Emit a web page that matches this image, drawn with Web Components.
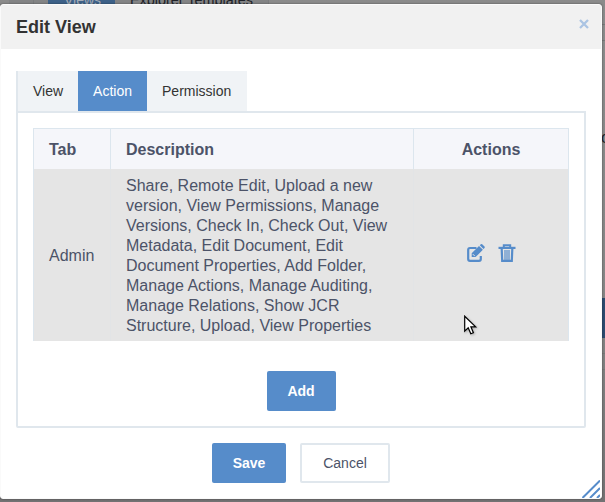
<!DOCTYPE html>
<html lang="en">
<head>
<meta charset="utf-8">
<title>Edit View</title>
<style>
html,body{margin:0;height:100%;overflow:hidden}
body{font-family:"Liberation Sans",Arial,sans-serif;color:#4c5368;background:#8a8a8a}
</style>
</head>
<body>
<dimmed-page></dimmed-page>
<edit-dialog heading="Edit View">
  <tab-bar slot="body">
    <tab-item>View</tab-item><tab-item active>Action</tab-item><tab-item style="width:70px">Permission</tab-item>
  </tab-bar>
  <tab-panel slot="body">
    <action-table></action-table>
    <ui-button slot="foot" style="--w:69px">Add</ui-button>
  </tab-panel>
  <ui-button slot="foot" style="--w:74px">Save</ui-button>
  <ui-button slot="foot" plain style="--w:90px">Cancel</ui-button>
</edit-dialog>
<mouse-pointer></mouse-pointer>
<script>
const define = (name, html) => customElements.define(name, class extends HTMLElement {
  constructor() {
    super();
    const t = document.createElement('template');
    t.innerHTML = html;
    this.attachShadow({ mode: 'open' }).append(t.content.cloneNode(true));
    const h = this.shadowRoot.querySelector('[data-heading]');
    if (h) h.textContent = this.getAttribute('heading');
  }
});

define('dimmed-page', `<style>
:host{position:absolute;inset:0;overflow:hidden;background:linear-gradient(#8b8b8b,#858585 60%,#737273);color:#202228;font-size:16px}
.t{position:absolute;top:0;left:9px;right:336px;height:4px;background:#838485;border-right:1px solid #7b7d7f}
.c{position:absolute;left:33px;top:0;width:1px;height:4px;background:#797b7d}
.v{position:absolute;left:48px;top:0;width:67px;height:20px;background:#3d6188}
.v span,.e{position:absolute;white-space:nowrap;line-height:18px}
.v span{left:16px;top:-9px;font-size:14px;color:#a5adb7}
.e{left:130px;top:-9px;font-size:14.4px}
.l{position:absolute;left:602px;right:0;height:1px;background:#777}
.b{position:absolute;left:602px;top:298px;width:3px;height:40px;background:#2c4b70}
.o{position:absolute;left:601px;top:129px;line-height:18px}
</style><div class="t"></div><div class="c"></div><div class="v"><span>Views</span></div><div class="e">Explorer Templates</div>
<div class="l" style="top:24px"></div><div class="l" style="top:40px"></div><div class="o">o</div><div class="b"></div><div class="l" style="top:353px"></div><div class="l" style="top:369px"></div>`);

define('edit-dialog', `<style>
:host{position:relative;display:flex;flex-direction:column;box-sizing:border-box;width:602px;height:495px;margin-top:4px;background:#fff;border:1px solid #fafafa;border-radius:3px;box-shadow:0 0 2px rgba(0,0,0,.5)}
header{display:flex;align-items:center;justify-content:space-between;height:44px;box-sizing:border-box;padding:0 12px 0 15px;background:#f1f1f1;border-radius:2px 2px 0 0}
h1{margin:0;font-size:18px;line-height:20px;color:#333}
main{flex:none;padding:22px 15px 0}
footer{display:flex;justify-content:center;gap:14px;padding-top:15px}
.x{display:block;margin-top:-6px}
.grip{position:absolute;right:1px;bottom:0}
</style>
<header><h1 data-heading></h1><svg class="x" width="10" height="10" viewBox="0 0 10 10"><path d="M1 1L9 9M9 1L1 9" stroke="#abc4e3" stroke-width="2.3"/></svg></header>
<main><slot name="body"></slot></main>
<footer><slot name="foot"></slot></footer>
<svg class="grip" width="18" height="18" viewBox="0 0 18 18"><path d="M.5 18L18 .5M8 18L18 8M15 18L18 15" stroke="#568cca" stroke-width="2"/></svg>`);

define('tab-bar', `<style>:host{display:flex;height:40px;border-left:2px solid #e0e7ed}</style><slot></slot>`);
define('tab-item', `<style>
:host{display:flex;align-items:center;padding:0 15px;font-size:14px;color:#333;background:#f0f3f6}
:host([active]){background:#568cca;color:#fff}</style><slot></slot>`);

define('tab-panel', `<style>
:host{display:block;box-sizing:border-box;height:317px;padding:15px;border:2px solid #e0e7ed;border-radius:0 0 2px 2px}
.f{display:flex;justify-content:center;padding-top:30px}</style><slot></slot><div class="f"><slot name="foot"></slot></div>`);

define('ui-button', `<style>
:host{display:flex;align-items:center;justify-content:center;box-sizing:border-box;width:var(--w);height:40px;font-size:14px;font-weight:bold;color:#fff;background:#568cca;border-radius:2px}
:host([plain]){background:#fff;color:#4c5368;font-weight:normal;border:2px solid #e0e7ed}</style><slot></slot>`);

define('action-table', `<style>
:host{display:grid;grid-template-columns:77px 303px 154px;grid-template-rows:40px 172px;box-sizing:border-box;width:536px;height:213px;border:1px solid #dce6ee;border-bottom:0;font-size:16px;line-height:20px}
div{box-sizing:border-box;padding:0 15px;display:flex;align-items:center}
.h{padding-top:1px;background:#f5f6fa;font-weight:bold;border-right:1px solid #dce6ee}
.h:nth-of-type(3){border-right:0}
.r{background:#e5e5e5}
.k{border-right:1px solid #e2e4e6;padding-top:2px}
.m{justify-content:center}
.i{gap:13px;padding-bottom:4px;padding-left:16px}
svg{display:block}
</style>
<div class="h">Tab</div><div class="h">Description</div><div class="h m">Actions</div>
<div class="r k">Admin</div>
<div class="r k">Share, Remote Edit, Upload a new version, View Permissions, Manage Versions, Check In, Check Out, View Metadata, Edit Document, Edit Document Properties, Add Folder, Manage Actions, Manage Auditing, Manage Relations, Show JCR Structure, Upload, View Properties</div>
<div class="r m i">
<svg width="18" height="18" viewBox="0 0 18 18" fill="none" stroke="#568cca"><path d="M9.5 4H3Q1.2 4 1.2 5.8V15Q1.2 16.8 3 16.8H12Q13.8 16.8 13.8 15V12" stroke-width="2.2"/><path d="M4.7 9.2L12 1.9L15.9 5.8L8.6 13.1H4.7ZM12.8 1.3L13.8 .3Q14.5 -.3 15.2 .3L17.5 2.6Q18.1 3.3 17.5 4L16.5 5Z" fill="#568cca" stroke="none"/><path d="M5.8 10.1L7.8 12.1" stroke="#e5e5e5" stroke-width="1"/></svg>
<svg width="18" height="18" viewBox="0 0 18 18" fill="none" stroke="#568cca"><path d="M.5 3.9H17.5" stroke-width="2.2"/><path d="M5.8 4V1.2H12.2V4" stroke-width="2"/><path d="M3.7 5L4.2 16.9H13.8L14.3 5" stroke-width="2.2"/><path d="M7 6V16M9 6V16M11 6V16" stroke-width="1.2"/></svg>
</div>`);

define('mouse-pointer', `<style>:host{position:absolute;left:464px;top:315px}svg{display:block;filter:drop-shadow(1px 1px 1px rgba(0,0,0,.25))}</style>
<svg width="14" height="21" viewBox="0 0 14 21"><path d="M.7 1.2V16.1L4.2 12.8L6.8 18.8L9.4 17.7L6.9 11.8H11.7Z" fill="#fff" stroke="#000" stroke-width="1.2"/></svg>`);
</script>
</body>
</html>
